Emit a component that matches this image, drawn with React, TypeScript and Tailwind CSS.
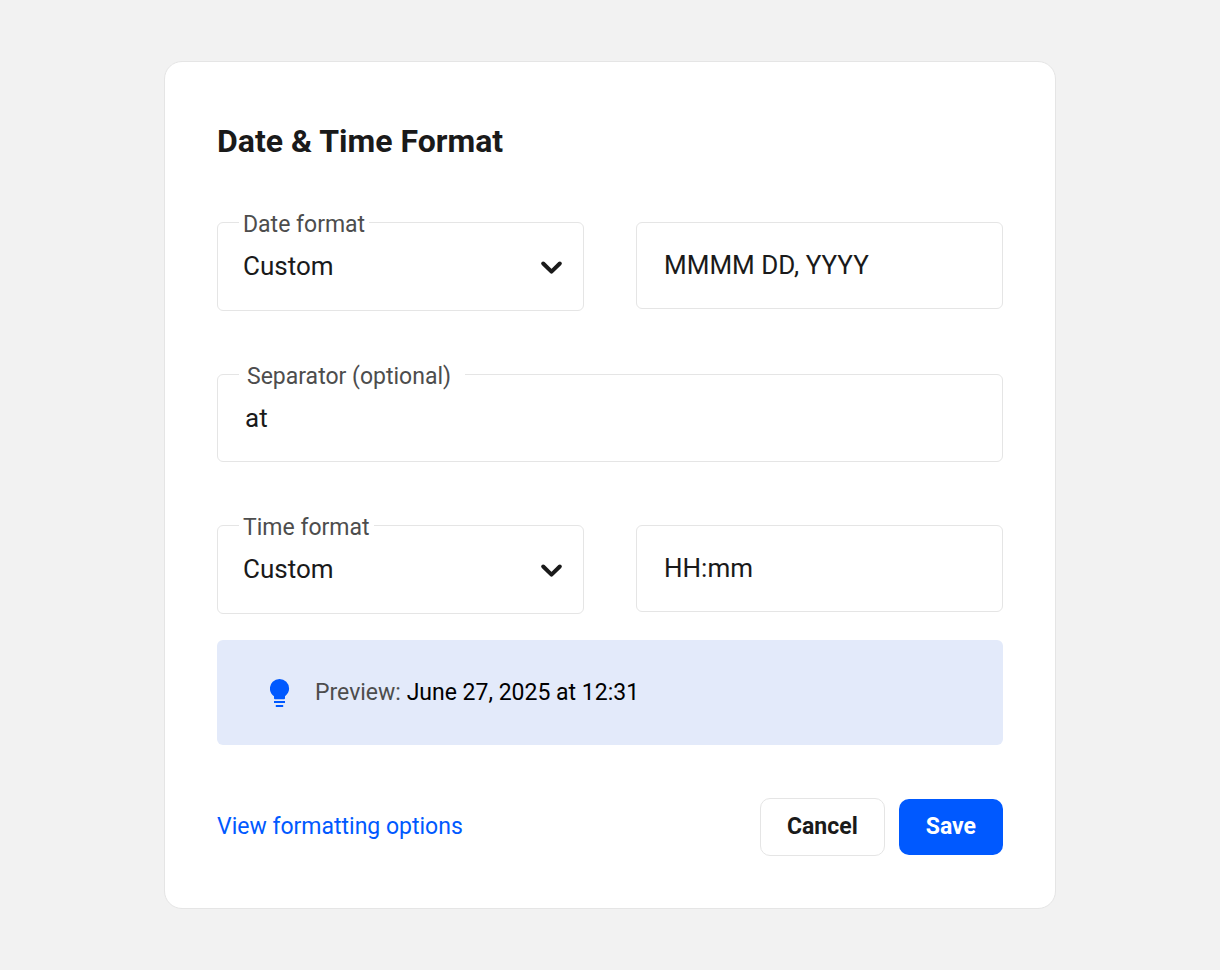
import { useState } from "react";

function FormatSelect({
  id,
  label,
  value,
  onChange,
}: {
  id: string;
  label: string;
  value: string;
  onChange: (value: string) => void;
}) {
  return (
    <div className="relative">
      <select
        id={id}
        value={value}
        onChange={(e) => onChange(e.target.value)}
        className="block h-[89px] w-full appearance-none rounded-md border border-[#e5e5e5] bg-white pr-14 pl-[25px] text-[26px] text-[#1a1a1a]"
      >
        <option>Custom</option>
        <option>Default</option>
      </select>
      <label
        htmlFor={id}
        className="absolute -top-[11px] left-[22px] bg-white px-1 text-[23px] leading-7 text-[#4d4d4d]"
      >
        {label}
      </label>
      <svg
        aria-hidden="true"
        viewBox="0 0 24 16"
        className="pointer-events-none absolute top-[37px] right-5 h-4 w-6"
        fill="none"
        stroke="#1a1a1a"
        strokeWidth="4"
        strokeLinecap="round"
        strokeLinejoin="round"
      >
        <path d="M3.2 4.5 L11.5 12.6 L19.8 4.5" />
      </svg>
    </div>
  );
}

function PatternInput({
  label,
  value,
  onChange,
}: {
  label: string;
  value: string;
  onChange: (value: string) => void;
}) {
  return (
    <input
      type="text"
      aria-label={label}
      value={value}
      onChange={(e) => onChange(e.target.value)}
      className="block h-[87px] w-full rounded-md border border-[#e5e5e5] bg-white px-[27px] pb-0.5 text-[26px] text-[#1a1a1a]"
    />
  );
}

export default function App() {
  const [dateFormat, setDateFormat] = useState("Custom");
  const [timeFormat, setTimeFormat] = useState("Custom");
  const [datePattern, setDatePattern] = useState("MMMM DD, YYYY");
  const [timePattern, setTimePattern] = useState("HH:mm");
  const [separator, setSeparator] = useState("at");

  return (
    <main className="flex min-h-screen items-center justify-center bg-[#f2f2f2] font-[Roboto,sans-serif]">
      <form
        onSubmit={(e) => e.preventDefault()}
        className="w-full max-w-[892px] rounded-[18px] border border-[#e5e5e5] bg-white px-[52px] pt-[59px] pb-[52px]"
      >
        <h1 className="text-[32px] leading-10 font-bold text-[#1a1a1a]">
          Date &amp; Time Format
        </h1>

        <div className="mt-[61px] grid grid-cols-2 items-start gap-[52px]">
          <FormatSelect
            id="date-format"
            label="Date format"
            value={dateFormat}
            onChange={setDateFormat}
          />
          <PatternInput
            label="Date pattern"
            value={datePattern}
            onChange={setDatePattern}
          />
        </div>

        <div className="relative mt-[63px]">
          <input
            id="separator"
            type="text"
            value={separator}
            onChange={(e) => setSeparator(e.target.value)}
            className="block h-[88px] w-full rounded-md border border-[#e5e5e5] bg-white px-[27px] text-[26px] text-[#1a1a1a]"
          />
          <label
            htmlFor="separator"
            className="absolute -top-[11px] left-[22px] bg-white pr-3.5 pl-2 text-[23px] leading-7 text-[#4d4d4d]"
          >
            Separator (optional)
          </label>
        </div>

        <div className="mt-[63px] grid grid-cols-2 items-start gap-[52px]">
          <FormatSelect
            id="time-format"
            label="Time format"
            value={timeFormat}
            onChange={setTimeFormat}
          />
          <PatternInput
            label="Time pattern"
            value={timePattern}
            onChange={setTimePattern}
          />
        </div>

        <div className="mt-[26px] flex h-[105px] items-center gap-[25px] rounded-md bg-[#e3eafa] pl-[53px]">
          <svg
            aria-hidden="true"
            viewBox="0 0 20 28"
            className="h-7 w-5"
            fill="#0059ff"
          >
            <path d="M9.5 0 A9.6 9.6 0 0 1 19.1 9.6 C19.1 12.9 17.6 15.4 15 17.2 V19.2 Q15 20.2 14 20.2 H5 Q4 20.2 4 19.2 V17.2 C1.4 15.4 -0.1 12.9 -0.1 9.6 A9.6 9.6 0 0 1 9.5 0 Z" />
            <path d="M4 22 H15 V24 H4 Z M5.8 26 H13.2 V28 H5.8 Z" />
          </svg>
          <p className="text-[23px] leading-7 text-[#4d4d4d]">
            Preview: <span className="text-black">June 27, 2025 at 12:31</span>
          </p>
        </div>

        <div className="mt-[53px] flex items-center">
          <a href="#formatting-options" className="text-[23px] leading-7 text-[#0059ff]">
            View formatting options
          </a>
          <button
            type="button"
            className="ml-auto h-[58px] rounded-[10px] border border-[#e5e5e5] bg-white px-[26px] text-[23px] font-bold text-[#1a1a1a]"
          >
            Cancel
          </button>
          <button
            type="submit"
            className="ml-3.5 h-14 rounded-[10px] bg-[#0059ff] px-[27px] text-[23px] font-bold text-white"
          >
            Save
          </button>
        </div>
      </form>
    </main>
  );
}
